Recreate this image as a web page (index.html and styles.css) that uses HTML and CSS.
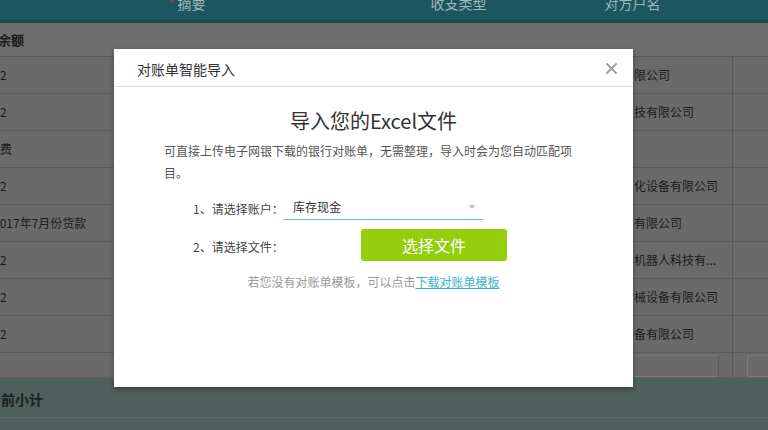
FILE: index.html
```html
<!DOCTYPE html>
<html lang="zh-CN">
<head>
    <meta charset="UTF-8">
    <meta name="viewport" content="width=device-width, initial-scale=1.0">
    <title>对账单智能导入</title>
    <link rel="stylesheet" href="styles.css">
</head>
<body>
    <div class="page">
        <div class="grid-head">
            <span class="th th-summary"><i class="req">*</i>摘要</span>
            <span class="th th-type">收支类型</span>
            <span class="th th-name">对方户名</span>
        </div>
        <div class="row row-balance">
            <span class="cell-left cell-bold">余额</span>
        </div>
        <div class="row"><span class="cell-left">2</span><span class="cell-right">限公司</span><span class="cell-end"></span></div>
        <div class="row"><span class="cell-left">2</span><span class="cell-right">技有限公司</span><span class="cell-end"></span></div>
        <div class="row"><span class="cell-left">费</span><span class="cell-right"></span><span class="cell-end"></span></div>
        <div class="row"><span class="cell-left">2</span><span class="cell-right">化设备有限公司</span><span class="cell-end"></span></div>
        <div class="row"><span class="cell-left cell-cut">2017年7月份货款</span><span class="cell-right">有限公司</span><span class="cell-end"></span></div>
        <div class="row"><span class="cell-left">2</span><span class="cell-right">机器人科技有...</span><span class="cell-end"></span></div>
        <div class="row"><span class="cell-left">2</span><span class="cell-right">械设备有限公司</span><span class="cell-end"></span></div>
        <div class="row"><span class="cell-left">2</span><span class="cell-right">备有限公司</span><span class="cell-end"></span></div>
        <div class="row row-input">
            <span class="cell-left"></span>
            <span class="cell-right"><span class="fake-input"></span></span>
            <span class="cell-end"><span class="fake-input"></span></span>
        </div>
        <div class="subtotal"><span class="subtotal-label">当前小计</span></div>
    </div>

    <!-- import dialog -->
    <div class="modal">
        <div class="modal-header">
            <span class="modal-title">对账单智能导入</span>
            <svg class="modal-close" width="11" height="11" viewBox="0 0 11 11">
                <path d="M1 1 L10 10 M10 1 L1 10" stroke="#a0a0a0" stroke-width="2" stroke-linecap="round"/>
            </svg>
        </div>
        <div class="modal-body">
            <h2 class="import-title">导入您的Excel文件</h2>
            <p class="import-desc">可直接上传电子网银下载的银行对账单，无需整理，导入时会为您自动匹配项目。</p>
            <div class="form-row">
                <span class="form-label">1、请选择账户：</span>
                <div class="select">
                    <span>库存现金</span>
                    <i class="select-arrow"></i>
                </div>
            </div>
            <div class="form-row">
                <span class="form-label">2、请选择文件：</span>
                <button class="btn-file">选择文件</button>
            </div>
            <p class="import-hint">若您没有对账单模板，可以点击<a href="#">下载对账单模板</a></p>
        </div>
    </div>
</body>
</html>
```

FILE: styles.css
```css
body {
    margin: 0;
    overflow: hidden;
    background-color: #6b6a6b;
    font-family: "Noto Sans CJK SC", "Noto Sans", sans-serif;
    color: #1b1b1b;
}
.page {
    display: flex;
    flex-direction: column;
    height: 430px;
}
.grid-head {
    display: flex;
    height: 20px;
    background-color: #1c5761;
    border-bottom: 3px solid #184b53;
    overflow: hidden;
    font-size: 14px;
    line-height: 14px;
    color: #9db6ba;
}
.th {
    margin-top: -4px;
    white-space: nowrap;
}
.th-summary {
    margin-left: 168px;
}
.req {
    font-style: normal;
    color: #b3343a;
    margin-right: 3px;
}
.th-type {
    margin-left: 225px;
}
.th-name {
    margin-left: 118px;
}
.row {
    display: grid;
    grid-template-columns: 1fr 104px 36px;
    height: 37px;
    box-sizing: border-box;
    border-bottom: 1px solid #5c5b5c;
    font-size: 12px;
    line-height: 36px;
}
.row-balance {
    display: flex;
    height: 34px;
    background-color: #6d6d6d;
    line-height: 33px;
}
.cell-left {
    white-space: nowrap;
}
.cell-bold {
    font-size: 13px;
    font-weight: bold;
    margin-left: -2px;
}
.cell-cut {
    margin-left: -7px;
}
.cell-right {
    padding-left: 6px;
    white-space: nowrap;
}
.cell-end {
    border-left: 1px solid #5a595a;
}
.row-input {
    height: 26px;
    border-top: 1px solid #5c5b5c;
    border-bottom: 1px solid #626262;
    margin-top: -1px;
}
.row-input .cell-right,
.row-input .cell-end {
    padding: 2px 0 0 0;
}
.fake-input {
    display: block;
    height: 20px;
    border: 1px solid #7c7b7c;
    border-right-color: #5a5a5a;
    margin: 0 13px 0 4px;
}
.row-input .cell-end .fake-input {
    margin: 0 -2px 0 14px;
}
.subtotal {
    flex: 1;
    background-color: #4f5f5c;
}
.subtotal-label {
    display: block;
    height: 39px;
    line-height: 42px;
    border-bottom: 1px solid #586966;
    margin-left: -13px;
    font-size: 14px;
    font-weight: bold;
    color: #1a2321;
}
.modal {
    position: absolute;
    left: 114px;
    top: 49px;
    width: 519px;
    height: 338px;
    background-color: #fff;
    box-shadow: 0 2px 5px rgba(0, 0, 0, 0.35);
}
.modal-header {
    display: flex;
    align-items: center;
    justify-content: space-between;
    height: 37px;
    padding: 0 16px 0 23px;
    border-bottom: 1px solid #dcdcdc;
}
.modal-title {
    font-size: 14px;
    color: #333;
    margin-top: 2px;
}
.modal-close {
    margin-top: 1px;
}
.modal-body {
    padding: 20px 50px 0 50px;
}
.import-title {
    margin: 0;
    text-align: center;
    font-size: 20px;
    font-weight: normal;
    line-height: 28px;
    color: #333;
}
.import-desc {
    margin: 5px 0 0 0;
    font-size: 12px;
    line-height: 22px;
    color: #555;
}
.form-row {
    display: flex;
    align-items: center;
    padding-left: 29px;
    font-size: 12px;
    color: #444;
}
.form-row + .form-row {
    margin-top: 9px;
}
.form-row:first-of-type {
    margin-top: 10px;
}
.form-label {
    width: 90px;
    flex-shrink: 0;
    white-space: nowrap;
    padding-top: 2px;
}
.select {
    display: flex;
    align-items: center;
    justify-content: space-between;
    box-sizing: border-box;
    width: 200px;
    height: 26px;
    padding: 0 8px 0 10px;
    border-bottom: 1px solid #5fc1c5;
    color: #333;
}
.select-arrow {
    width: 0;
    height: 0;
    border-left: 3px solid transparent;
    border-right: 3px solid transparent;
    border-top: 4px solid #bbb;
}
.btn-file {
    margin-left: 78px;
    width: 146px;
    height: 32px;
    border: none;
    border-radius: 3px;
    background-color: #93cf0d;
    color: #fff;
    font-family: inherit;
    font-size: 16px;
    line-height: 32px;
    padding: 0;
}
.import-hint {
    margin: 11px 0 0 0;
    text-align: center;
    font-size: 12px;
    line-height: 20px;
    color: #999;
}
.import-hint a {
    color: #3eb3c6;
    text-decoration: underline;
}
```
